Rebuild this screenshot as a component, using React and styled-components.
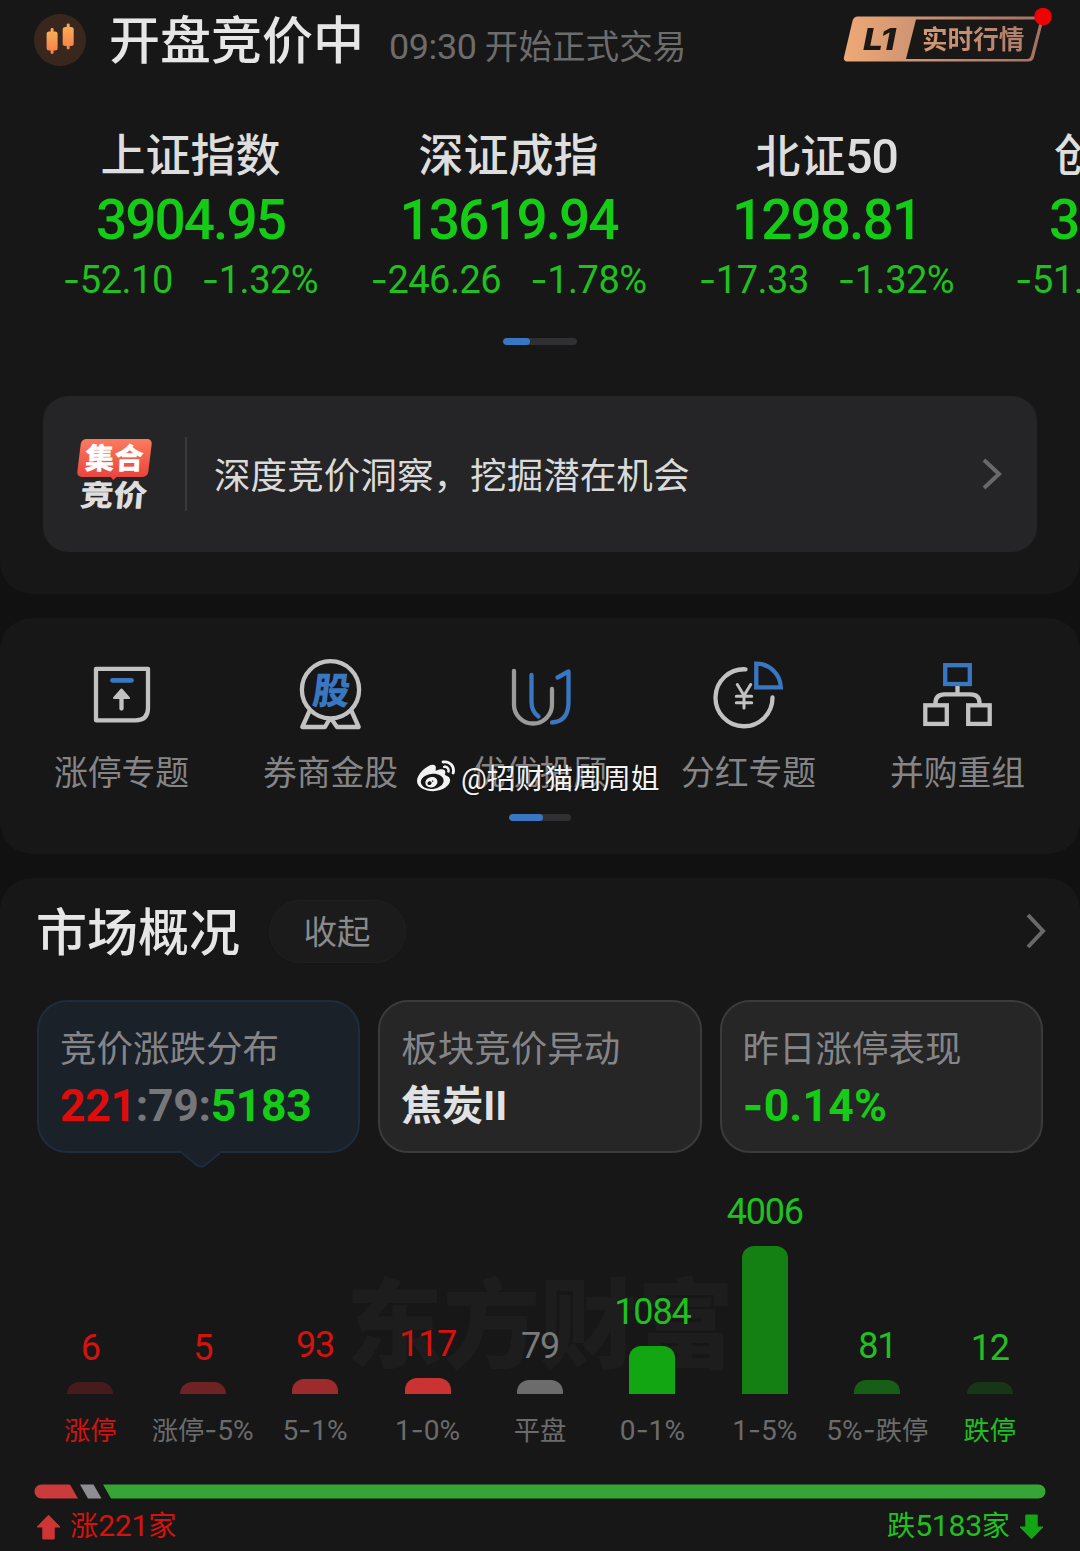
import React from "react";
import styled, { createGlobalStyle } from "styled-components";
import { FaWeibo } from "react-icons/fa";

const RED = "#d4130f";
const GREEN = "#1fc020";
const BRIGHT_GREEN = "#14cb16";
const GREY = "#6b6b6c";
const BLUE = "#3a77c2";

const GlobalStyle = createGlobalStyle`
  * { box-sizing: border-box; }
  body {
    margin: 0;
    background: #111111;
    font-family: Roboto, "Noto Sans CJK SC", sans-serif;
    color: #e4e4e4;
  }
`;

const Page = styled.main`
  width: 1080px;
  height: 1551px;
  overflow: hidden;
  display: flex;
  flex-direction: column;
  gap: 24px;
  white-space: nowrap;
`;

const Card = styled.section`
  position: relative;
  flex: none;
  height: ${(p) => p.$height}px;
  background: #171717;
  border-radius: ${(p) => p.$radius};
  overflow: hidden;
`;

/* ---------- header ---------- */

const Header = styled.header`
  display: flex;
  align-items: center;
  height: 79px;
  padding: 0 35px 0 34px;
`;

const Candle = styled.svg`
  width: 52px;
  height: 52px;
`;

const Phase = styled.h1`
  margin: 5px 0 0 23px;
  font-size: 51px;
  line-height: 60px;
  font-weight: 500;
  color: #e6e6e6;
`;

const PhaseNote = styled.span`
  margin: 16px 0 0 25px;
  font-size: 33.6px;
  line-height: 40px;
  color: #6c6c6d;
`;

const Digits = styled.span`
  font-size: ${(p) => p.$size || "1.07em"};
  letter-spacing: ${(p) => p.$spacing || 0}px;
`;

const Hyphen = styled.span`
  font-family: Inter, sans-serif;
  line-height: 1;
`;

const LevelBadge = styled.div`
  position: relative;
  display: flex;
  align-items: center;
  width: 202px;
  height: 48px;
  margin: 0 0 1px auto;
`;

const BadgeShape = styled.svg`
  position: absolute;
  inset: 0;
  overflow: visible;
`;

const LevelName = styled.span`
  position: relative;
  width: 59px;
  margin-left: 20px;
  font: italic 800 30px/48px Inter, sans-serif;
  letter-spacing: -1px;
  color: #1c1815;
  transform: scaleX(1.18);
  transform-origin: left;
`;

const LevelText = styled.span`
  position: relative;
  top: 1px;
  font-size: 25.6px;
  line-height: 48px;
  font-weight: 700;
  background: linear-gradient(90deg, #d39a76, #b07e6c);
  background-clip: text;
  color: transparent;
`;

/* ---------- indices ---------- */

const IndexStrip = styled.div`
  display: flex;
  margin-top: 48px;
  padding-left: 32px;
`;

const IndexColumn = styled.div`
  flex: none;
  width: 318px;
  display: flex;
  flex-direction: column;
  align-items: ${(p) => (p.$clipped ? "flex-start" : "center")};
`;

const IndexName = styled.div`
  height: 60px;
  font-size: 45px;
  line-height: 60px;
  font-weight: 500;
  color: #dedede;
  margin-left: ${(p) => p.$indent || -1}px;
`;

const IndexValue = styled.div`
  height: 66px;
  font-size: 55px;
  line-height: 67px;
  font-weight: 500;
  letter-spacing: -2px;
  color: ${BRIGHT_GREEN};
  margin-left: ${(p) => p.$indent || -1}px;
`;

const IndexChange = styled.div`
  display: flex;
  gap: 29px;
  height: 54px;
  font-size: 38px;
  line-height: 54px;
  letter-spacing: -0.5px;
  color: ${GREEN};
  margin-left: ${(p) => p.$indent || -1}px;
`;

const Pager = styled.div`
  width: ${(p) => p.$width}px;
  height: 7px;
  margin: ${(p) => p.$top}px auto 0;
  border-radius: 4px;
  background: #303032;
  overflow: hidden;
`;

const PagerThumb = styled.div`
  width: ${(p) => p.$width}px;
  height: 7px;
  border-radius: 4px;
  background: ${BLUE};
`;

/* ---------- banner ---------- */

const Banner = styled.div`
  display: flex;
  align-items: center;
  width: 994px;
  height: 156px;
  margin: 51px 0 0 43px;
  padding: 0 35px 0 33px;
  border-radius: 25px;
  background: #252527;
`;

const AuctionLogo = styled.div`
  width: 76px;
  height: 74px;
  display: flex;
  flex-direction: column;
  align-items: center;
`;

const LogoBubble = styled.div`
  position: relative;
  width: 71px;
  height: 38px;
  margin-top: 2px;
  border-radius: 5px;
  transform: skewX(-7deg);
  background: linear-gradient(#fb7b5f, #e8453f);
  color: #fff;
  font-size: 29.5px;
  line-height: 40px;
  font-weight: 900;
  text-align: center;

  &::after {
    content: "";
    position: absolute;
    left: 33px;
    top: 37px;
    border: 4px solid transparent;
    border-top-color: #e8453f;
    border-bottom: 0;
  }
`;

const BubbleWord = styled.div`
  transform: skewX(5deg);
`;

const LogoWord = styled.div`
  transform: translateX(-1px) skewX(-5deg) scaleY(0.88);
  font-size: 33.5px;
  line-height: 36px;
  margin-top: 1px;
  font-weight: 900;
  color: #dedede;
`;

const Divider = styled.div`
  width: 2px;
  height: 74px;
  margin: 0 27px 0 33px;
  background: #39393b;
`;

const BannerText = styled.div`
  flex: 1;
  padding-top: 5px;
  font-size: 36.6px;
  line-height: 50px;
  color: #dadada;
`;

const ChevronSvg = styled.svg`
  width: ${(p) => p.$w}px;
  height: ${(p) => p.$h}px;
  fill: none;
  stroke: #69696b;
  stroke-width: 4;
`;

/* ---------- shortcuts ---------- */

const Shortcuts = styled.nav`
  display: grid;
  grid-template-columns: repeat(5, 209px);
  padding: 38px 0 0 17px;
`;

const Shortcut = styled.div`
  display: flex;
  flex-direction: column;
  align-items: center;
`;

const ShortcutIcon = styled.svg`
  width: 72px;
  height: 76px;
  fill: none;
  stroke: ${(p) => p.$stroke || "#c2c2c2"};
  stroke-width: 4.3;
  stroke-linecap: round;
  stroke-linejoin: round;
`;

const IconWord = styled.text`
  font: 900 37px "Noto Sans CJK SC", sans-serif;
  fill: ${BLUE};
  stroke: none;
`;

const ShortcutLabel = styled.div`
  margin-top: 20px;
  font-size: 33.8px;
  line-height: 44px;
  color: #858587;
`;

const Credit = styled.div`
  position: absolute;
  left: 417px;
  top: 138px;
  display: flex;
  align-items: center;
  gap: 6px;
  height: 42px;
  color: #f3f3f3;
  font-size: 28.8px;
  line-height: 42px;
  text-shadow: 0 0 2px rgba(0, 0, 0, 0.7);
`;

const CreditName = styled.span`
  padding-top: 3px;
`;

/* ---------- market overview ---------- */

const SectionHead = styled.div`
  display: flex;
  align-items: center;
  height: 63px;
  margin-top: 21px;
  padding: 0 34px 0 36px;
`;

const SectionTitle = styled.h2`
  margin: 7px 0 0;
  font-size: 51px;
  line-height: 60px;
  font-weight: 500;
  color: #e6e6e6;
`;

const Collapse = styled.button`
  width: 137px;
  height: 63px;
  margin: 1px auto 0 29px;
  padding: 3px 1px 0 0;
  border: 1.5px solid #202021;
  border-radius: 32px;
  background: #1b1b1b;
  color: #8a8a8c;
  font: 400 33.5px/56px Roboto, "Noto Sans CJK SC", sans-serif;
`;

const Tabs = styled.div`
  display: flex;
  gap: 18px;
  margin: 37.5px 0 0 37px;
`;

const Tab = styled.div`
  position: relative;
  width: 323.3px;
  height: 153px;
  padding: 23px 0 0 21px;
  border: 2px solid ${(p) => (p.$active ? "#1c2d3f" : "#3b3b3b")};
  border-radius: 30px;
  background: ${(p) => (p.$active ? "#1b2129" : "#262626")};
`;

const TabLabel = styled.div`
  font-size: 36.5px;
  line-height: 50px;
  color: #858588;
`;

const TabValue = styled.div`
  height: 56px;
  margin-top: 3px;
  font-size: ${(p) => p.$size || 44.5}px;
  line-height: 56px;
  font-weight: 700;
  letter-spacing: ${(p) => p.$spacing || 0}px;
  color: ${(p) => p.$color};
`;

const Tint = styled.span`
  color: ${(p) => p.$color};
`;

const TabTail = styled.svg`
  position: absolute;
  left: 141px;
  top: 148.5px;
  width: 42px;
  height: 18px;
`;

const Chart = styled.div`
  position: relative;
  display: grid;
  grid-template-columns: repeat(9, 112.45px);
  height: 294px;
  padding-left: 34px;
`;

const ChartMark = styled.div`
  position: absolute;
  left: 346px;
  top: 104px;
  font-size: 97px;
  line-height: 140px;
  font-weight: 900;
  color: #1d1d1d;
`;

const ChartColumn = styled.div`
  position: relative;
  display: flex;
  flex-direction: column;
  align-items: center;
  justify-content: flex-end;
`;

const Count = styled.div`
  margin-bottom: 16px;
  font-size: 36px;
  line-height: 36px;
  letter-spacing: -1.2px;
  color: ${(p) => p.$color};
`;

const Bar = styled.div`
  width: 46px;
  height: ${(p) => p.$height}px;
  border-radius: 12px 12px 0 0;
  background: ${(p) => p.$color};
`;

const Range = styled.div`
  height: 53px;
  padding-top: 20px;
  font-size: 26.3px;
  line-height: 34px;
  color: ${(p) => p.$color};
`;

const RatioBar = styled.svg`
  display: block;
  width: 1012px;
  height: 15px;
  margin: 37.5px 0 0 34px;
`;

const Totals = styled.div`
  display: flex;
  justify-content: space-between;
  margin: 5px 36px 0 36px;
`;

const Total = styled.div`
  display: flex;
  align-items: center;
  gap: 9px;
  font-size: 28.2px;
  line-height: 44px;
  color: ${(p) => p.$color};
`;

const Arrow = styled.svg`
  width: 25px;
  height: 26px;
  transform: ${(p) => (p.$down ? "rotate(180deg)" : "none")};
`;

const indices = [
  { name: ["上证指数"], value: "3904.95", change: "-52.10", rate: "-1.32%" },
  { name: ["深证成指"], value: "13619.94", change: "-246.26", rate: "-1.78%" },
  { name: ["北证", "50"], value: "1298.81", change: "-17.33", rate: "-1.32%" },
];

const bars = [
  { count: "6", h: 12, fill: "#461b1b", range: ["涨停"], tone: RED, labelTone: RED },
  { count: "5", h: 12, fill: "#6d2324", range: ["涨停", "-5%"], tone: RED },
  { count: "93", h: 15, fill: "#9d2b2b", range: ["", "5-1%"], tone: RED },
  { count: "117", h: 16, fill: "#cb3333", range: ["", "1-0%"], tone: RED },
  { count: "79", h: 14, fill: "#6c6c6c", range: ["平盘"], tone: "#7a7a7b" },
  { count: "1084", h: 48, fill: "#12a612", range: ["", "0-1%"], tone: GREEN },
  { count: "4006", h: 148, fill: "#148014", range: ["", "1-5%"], tone: GREEN },
  { count: "81", h: 14, fill: "#175e17", range: ["", "5%-", "跌停"], tone: GREEN },
  { count: "12", h: 12, fill: "#173617", range: ["跌停"], tone: GREEN, labelTone: GREEN },
];

const Hyphenated = ({ children }) => {
  const [before, after] = children.split("-");
  return (
    <span>
      {before}
      <Hyphen>-</Hyphen>
      {after}
    </span>
  );
};

const Chevron = ({ w, h }) => (
  <ChevronSvg $w={w} $h={h} viewBox={`0 0 ${w} ${h}`}>
    <path d={`M2 2 L${w - 3} ${h / 2} L2 ${h - 2}`} />
  </ChevronSvg>
);

const TotalArrow = ({ down, color }) => (
  <Arrow $down={down} viewBox="0 0 25 26">
    <path
      d="M12.5 1.2 L24 13 H18.2 V25 H6.8 V13 H1 Z"
      fill={color}
      stroke={color}
      strokeWidth="1"
      strokeLinejoin="round"
    />
  </Arrow>
);

export default function App() {
  return (
    <>
      <GlobalStyle />
      <Page>
        <Card $height={594} $radius="0 0 32px 32px">
          <Header>
            <Candle viewBox="0 0 52 52">
              <defs>
                <linearGradient id="candle" x1="0" y1="0" x2="0" y2="1">
                  <stop offset="0" stopColor="#f9ae58" />
                  <stop offset="1" stopColor="#f5834a" />
                </linearGradient>
              </defs>
              <circle cx="26" cy="26" r="26" fill="#39271e" />
              <g fill="url(#candle)">
                <rect x="12.6" y="17.5" width="11" height="19" rx="2.5" />
                <rect x="16.6" y="14" width="3" height="26" rx="1.4" />
                <rect x="28.7" y="13" width="11" height="19" rx="2.5" />
                <rect x="32.7" y="9.5" width="3" height="26" rx="1.4" />
              </g>
            </Candle>
            <Phase>开盘竞价中</Phase>
            <PhaseNote>
              <Digits $spacing={-0.4}>09:30</Digits> 开始正式交易
            </PhaseNote>
            <LevelBadge>
              <BadgeShape width="202" height="48" viewBox="0 0 202 48">
                <defs>
                  <linearGradient id="level" x1="0" y1="0" x2="1" y2="0">
                    <stop offset="0" stopColor="#efa976" />
                    <stop offset="0.35" stopColor="#cf9472" />
                    <stop offset="1" stopColor="#a27162" />
                  </linearGradient>
                </defs>
                <path
                  d="M15 1.500 H196 Q201 1.500 200 6.500 L191 42 Q190 46.500 185 46.500 H5 Q0 46.500 1 42 L9.500 6 Q10.500 1.500 15 1.500 Z"
                  fill="url(#level)"
                />
                <path
                  d="M73 4.500 H194 Q197.500 4.500 196.500 8 L188 40.500 Q187 44 183.500 44 H63 Z"
                  fill="#191817"
                />
                <circle cx="200" cy="1.500" r="8.800" fill="#ee0202" />
              </BadgeShape>
              <LevelName>L1</LevelName>
              <LevelText>实时行情</LevelText>
            </LevelBadge>
          </Header>

          <IndexStrip>
            {indices.map((item) => (
              <IndexColumn key={item.value}>
                <IndexName>
                  {item.name[0]}
                  {item.name[1] && <Digits $spacing={-1}>{item.name[1]}</Digits>}
                </IndexName>
                <IndexValue>{item.value}</IndexValue>
                <IndexChange>
                  <Hyphenated>{item.change}</Hyphenated>
                  <Hyphenated>{item.rate}</Hyphenated>
                </IndexChange>
              </IndexColumn>
            ))}
            <IndexColumn $clipped>
              <IndexName $indent={68}>创</IndexName>
              <IndexValue $indent={63}>3</IndexValue>
              <IndexChange $indent={29}>
                <Hyphenated>-51.</Hyphenated>
              </IndexChange>
            </IndexColumn>
          </IndexStrip>

          <Pager $width={74} $top={31}>
            <PagerThumb $width={27} />
          </Pager>

          <Banner>
            <AuctionLogo>
              <LogoBubble>
                <BubbleWord>集合</BubbleWord>
              </LogoBubble>
              <LogoWord>竞价</LogoWord>
            </AuctionLogo>
            <Divider />
            <BannerText>深度竞价洞察，挖掘潜在机会</BannerText>
            <Chevron w={20} h={32} />
          </Banner>
        </Card>

        <Card $height={236} $radius="32px">
          <Shortcuts>
            <Shortcut>
              <ShortcutIcon viewBox="0.500 0 72 76">
                <path d="M10.500 12.800 H62.500 V52 Q62.500 64.300 50 64.300 H10.500 Z" />
                <path d="M27 24.300 H46" stroke={BLUE} strokeWidth="4.800" />
                <path d="M36 36 V52.500" />
                <path d="M36 33.500 L43.500 42 H28.500 Z" fill="#c2c2c2" strokeWidth="2" />
              </ShortcutIcon>
              <ShortcutLabel>涨停专题</ShortcutLabel>
            </Shortcut>
            <Shortcut>
              <ShortcutIcon viewBox="0.500 0 72 76">
                <circle cx="36" cy="33.800" r="28.600" />
                <path d="M15 55 L7.800 71 H30.500 L35 63 M57 55 L64.200 71 H42.500 L37 63" />
                <IconWord x="17.500" y="48" transform="translate(5.500 0) skewX(-7)">股</IconWord>
              </ShortcutIcon>
              <ShortcutLabel>券商金股</ShortcutLabel>
            </Shortcut>
            <Shortcut>
              <ShortcutIcon viewBox="0.500 0 72 76" $stroke="#9b9b9b">
                <path d="M28 19 V46 Q28 55.500 35 60.500" stroke={BLUE} />
                <path d="M54 21.500 L65 15.500 V46 Q65 65.500 48.500 66.500" stroke={BLUE} />
                <path d="M10.500 15 V48.500 A19 19 0 0 0 48.500 48.500 V33" />
              </ShortcutIcon>
              <ShortcutLabel>优优投顾</ShortcutLabel>
            </Shortcut>
            <Shortcut>
              <ShortcutIcon viewBox="0.500 0 72 76">
                <path d="M33 13.300 A28.500 28.500 0 1 0 60 41.500" />
                <path
                  d="M43.800 7.600 A24.500 24.500 0 0 1 68.300 31.300 H43.800 Z"
                  stroke={BLUE}
                  strokeLinejoin="miter"
                />
                <path
                  d="M24.800 28.500 L31.500 39.500 L38.200 28.500 M31.500 39.500 V52 M23.800 40.300 H39.200 M23.800 46.700 H39.200"
                  strokeWidth="3"
                />
              </ShortcutIcon>
              <ShortcutLabel>分红专题</ShortcutLabel>
            </Shortcut>
            <Shortcut>
              <ShortcutIcon viewBox="0.500 0 72 76">
                <path d="M36 30 V38 M14 48 V47 Q14 38.300 23 38.300 H49 Q58 38.300 58 47 V48" />
                <rect x="3.800" y="49.300" width="21.500" height="18.600" strokeLinejoin="miter" />
                <rect x="46.700" y="49.300" width="21.500" height="18.600" strokeLinejoin="miter" />
                <rect
                  x="23.700"
                  y="9.200"
                  width="24.600"
                  height="18.800"
                  stroke={BLUE}
                  strokeLinejoin="miter"
                />
              </ShortcutIcon>
              <ShortcutLabel>并购重组</ShortcutLabel>
            </Shortcut>
          </Shortcuts>
          <Pager $width={62} $top={18}>
            <PagerThumb $width={34} />
          </Pager>
          <Credit>
            <FaWeibo size={38} />
            <CreditName>@招财猫周周姐</CreditName>
          </Credit>
        </Card>

        <Card $height={700} $radius="32px 32px 0 0">
          <SectionHead>
            <SectionTitle>市场概况</SectionTitle>
            <Collapse>收起</Collapse>
            <Chevron w={20} h={36} />
          </SectionHead>

          <Tabs>
            <Tab $active>
              <TabLabel>竞价涨跌分布</TabLabel>
              <TabValue $color="#77777a" $spacing={-0.3}>
                <Tint $color="#dd0d0d">221</Tint>:79:<Tint $color={BRIGHT_GREEN}>5183</Tint>
              </TabValue>
              <TabTail viewBox="0 0 42 18">
                <path d="M2 0 L3 3 L17 15.500 Q21 18.500 25 15.500 L39 3 L40 0 Z" fill="#1b2129" />
                <path
                  d="M2 3 L17 15.200 Q21 18 25 15.200 L40 3"
                  fill="none"
                  stroke="#1c2d3f"
                  strokeWidth="1.800"
                />
              </TabTail>
            </Tab>
            <Tab>
              <TabLabel>板块竞价异动</TabLabel>
              <TabValue $color="#e2e2e2" $size={41}>焦炭II</TabValue>
            </Tab>
            <Tab>
              <TabLabel>昨日涨停表现</TabLabel>
              <TabValue $color={BRIGHT_GREEN} $spacing={0.2}>
                <Hyphenated>-0.14%</Hyphenated>
              </TabValue>
            </Tab>
          </Tabs>

          <Chart>
            <ChartMark>东方财富</ChartMark>
            {bars.map((bar) => (
              <ChartColumn key={bar.count}>
                <Count $color={bar.tone}>{bar.count}</Count>
                <Bar $height={bar.h} $color={bar.fill} />
                <Range $color={bar.labelTone || GREY}>
                  {bar.range[0]}
                  {bar.range[1] && (
                    <Digits>
                      <Hyphenated>{bar.range[1]}</Hyphenated>
                    </Digits>
                  )}
                  {bar.range[2]}
                </Range>
              </ChartColumn>
            ))}
          </Chart>

          <RatioBar viewBox="0 0 1012 15">
            <path d="M7.500 0.500 H36 L44 14.500 H7.500 A7 7 0 0 1 7.500 0.500 Z" fill="#cb3b3b" />
            <path d="M46 0.500 H59.500 L67.500 14.500 H54 Z" fill="#8d8d92" />
            <path d="M69 0.500 H1004.500 A7 7 0 0 1 1004.500 14.500 H77 Z" fill="#36a536" />
          </RatioBar>

          <Totals>
            <Total $color={RED}>
              <TotalArrow color="#cf3535" />
              <span>
                涨<Digits $spacing={-0.3}>221</Digits>家
              </span>
            </Total>
            <Total $color={GREEN}>
              <span>
                跌<Digits $spacing={-0.3}>5183</Digits>家
              </span>
              <TotalArrow down color="#12a612" />
            </Total>
          </Totals>
        </Card>
      </Page>
    </>
  );
}
